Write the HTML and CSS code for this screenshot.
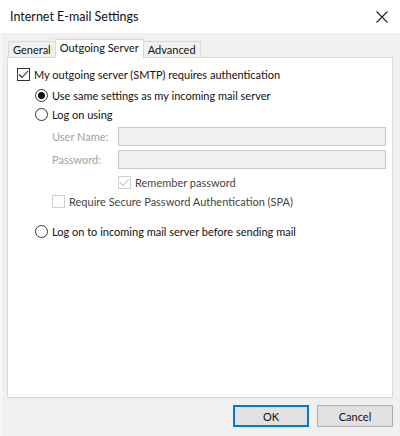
FILE: index.html
```html
<!DOCTYPE html>
<html lang="en">
<head>
  <meta charset="UTF-8" />
  <title>Internet E-mail Settings</title>
  <link rel="stylesheet" href="styles.css">
</head>
<body>
  <div class="dialog">
    <div class="titlebar">
      <span class="title">Internet E-mail Settings</span>
      <svg class="close" width="12" height="12" viewBox="0 0 12 12"><path d="M0.5 0.5 L11.5 11.5 M11.5 0.5 L0.5 11.5" stroke="#222" stroke-width="1.1" fill="none"/></svg>
    </div>

    <div class="body">
      <div class="tabs">
        <div class="tab">General</div>
        <div class="tab active">Outgoing Server</div>
        <div class="tab">Advanced</div>
      </div>

      <div class="panel">
        <label class="row top">
          <span class="check on"><svg width="11" height="9" viewBox="0 0 11 9"><path d="M1 4.5 L4 7.5 L10 1" stroke="#222" stroke-width="1.1" fill="none"/></svg></span>
          My outgoing server (SMTP) requires authentication
        </label>

        <div class="options">
          <label class="row"><span class="radio on"></span>Use same settings as my incoming mail server</label>
          <label class="row"><span class="radio"></span>Log on using</label>

          <div class="fields">
            <div class="field"><span class="flabel">User Name:</span><span class="input"></span></div>
            <div class="field"><span class="flabel">Password:</span><span class="input"></span></div>
            <label class="row remember">
              <span class="check dim"><svg width="11" height="9" viewBox="0 0 11 9"><path d="M1 4.5 L4 7.5 L10 1" stroke="#c4c4c4" stroke-width="1.1" fill="none"/></svg></span>
              Remember password
            </label>
            <label class="row spa"><span class="check dim"></span>Require Secure Password Authentication (SPA)</label>
          </div>

          <label class="row last"><span class="radio"></span>Log on to incoming mail server before sending mail</label>
        </div>
      </div>

      <div class="buttons">
        <button class="btn default">OK</button>
        <button class="btn">Cancel</button>
      </div>
    </div>
  </div>
</body>
</html>
```

FILE: styles.css
```css
body { margin: 0; font-family: Lato, "Noto Sans", sans-serif; font-size: 11px; color: #111; background: #fff; }
.dialog { width: 400px; height: 436px; display: flex; flex-direction: column; }
.titlebar { height: 33px; display: flex; align-items: center; justify-content: space-between; padding: 0 12px 0 10px; box-sizing: border-box; }
.title { font-size: 12.5px; color: #111; }
.body { flex: 1; background: #f0f0f0; padding: 6px 7px 0 5px; display: flex; flex-direction: column; border-left: 2px solid #f7f7f7; }

.tabs { display: flex; align-items: flex-end; height: 18px; padding-left: 1px; }
.tab { height: 16px; line-height: 15px; padding: 0 4px; border: 1px solid #d9d9d9; border-bottom: none; background: #f0f0f0; box-sizing: border-box; margin-right: -1px; }
.tab.active { height: 19px; background: #fff; position: relative; z-index: 1; margin-bottom: -1px; padding: 0 4px; }

.panel { height: 341px; background: #fff; border: 1px solid #d9d9d9; box-sizing: border-box; padding: 7px 0 0 9px; }
.row { display: flex; align-items: center; height: 19px; white-space: nowrap; }
.top { margin-bottom: 2px; }
.options { padding-left: 18px; }
.check { width: 13px; height: 13px; border: 1px solid #333; box-sizing: border-box; margin-right: 4px; display: flex; align-items: center; justify-content: center; background: #fff; }
.check.dim { border-color: #cfcfcf; }
.radio { width: 13px; height: 13px; border: 1px solid #333; border-radius: 50%; box-sizing: border-box; margin-right: 4px; display: flex; align-items: center; justify-content: center; }
.radio.on::after { content: ""; width: 7px; height: 7px; border-radius: 50%; background: #111; }

.fields { padding-left: 17px; margin-top: 1px; }
.field { display: flex; align-items: center; height: 23px; }
.flabel { width: 66px; color: #a0a0a0; }
.input { width: 268px; height: 19px; background: #f0f0f0; border: 1px solid #c8c8d4; box-sizing: border-box; }
.remember { margin-left: 66px; color: #444; margin-top: 2px; }
.spa { color: #444; }
.last { margin-top: 11px; }

.buttons { display: flex; justify-content: flex-end; gap: 8px; padding: 7px 0 0 0; }
.btn { width: 76px; height: 22px; font-family: inherit; font-size: 11px; color: #111; background: #e1e1e1; border: 1px solid #adadad; padding: 0; }
.btn.default { border: 2px solid #0078d7; }
```
